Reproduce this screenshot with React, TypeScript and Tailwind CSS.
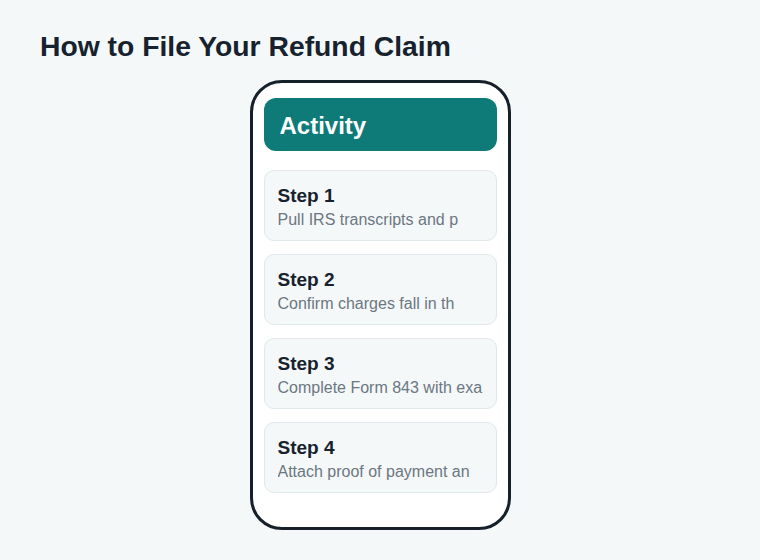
const steps = [
  "Pull IRS transcripts and payment records for the tax years in question.",
  "Confirm charges fall in the refund window before filing.",
  "Complete Form 843 with exact amounts and the penalty code.",
  "Attach proof of payment and mail to the service center.",
];

export default function App() {
  return (
    <div
      className="min-h-screen bg-[#f5f8f9] px-10 pt-[29px] pb-8"
      style={{ fontFamily: '"Liberation Sans", Arial, sans-serif' }}
    >
      <h1 className="text-[28.3px] leading-[34px] font-bold text-[#16222d]">
        How to File Your Refund Claim
      </h1>

      {/* Phone frame */}
      <div className="mx-auto mt-[17px] w-[261px] rounded-[32px] border-[3px] border-[#16202a] bg-white px-[11px] pt-[15px] pb-[34px]">
        <div className="flex h-[53px] items-center rounded-xl bg-[#0f7b78] px-4 pt-[3px]">
          <span className="text-[24px] leading-8 font-bold text-white">Activity</span>
        </div>

        <div className="mt-[19px] flex flex-col gap-[13px]">
          {steps.map((text, i) => (
            <div
              key={i}
              className="rounded-[10px] border border-[#e0e8eb] bg-[#f5f8f9] px-[13px] pt-[13px] pb-[10px]"
            >
              <p className="text-[19px] leading-6 font-bold text-[#16222d]">Step {i + 1}</p>
              <p className="mt-[2px] text-[16px] leading-5 text-[#6b7781] whitespace-nowrap overflow-hidden">
                {text.slice(0, 26)}
              </p>
            </div>
          ))}
        </div>
      </div>
    </div>
  );
}
